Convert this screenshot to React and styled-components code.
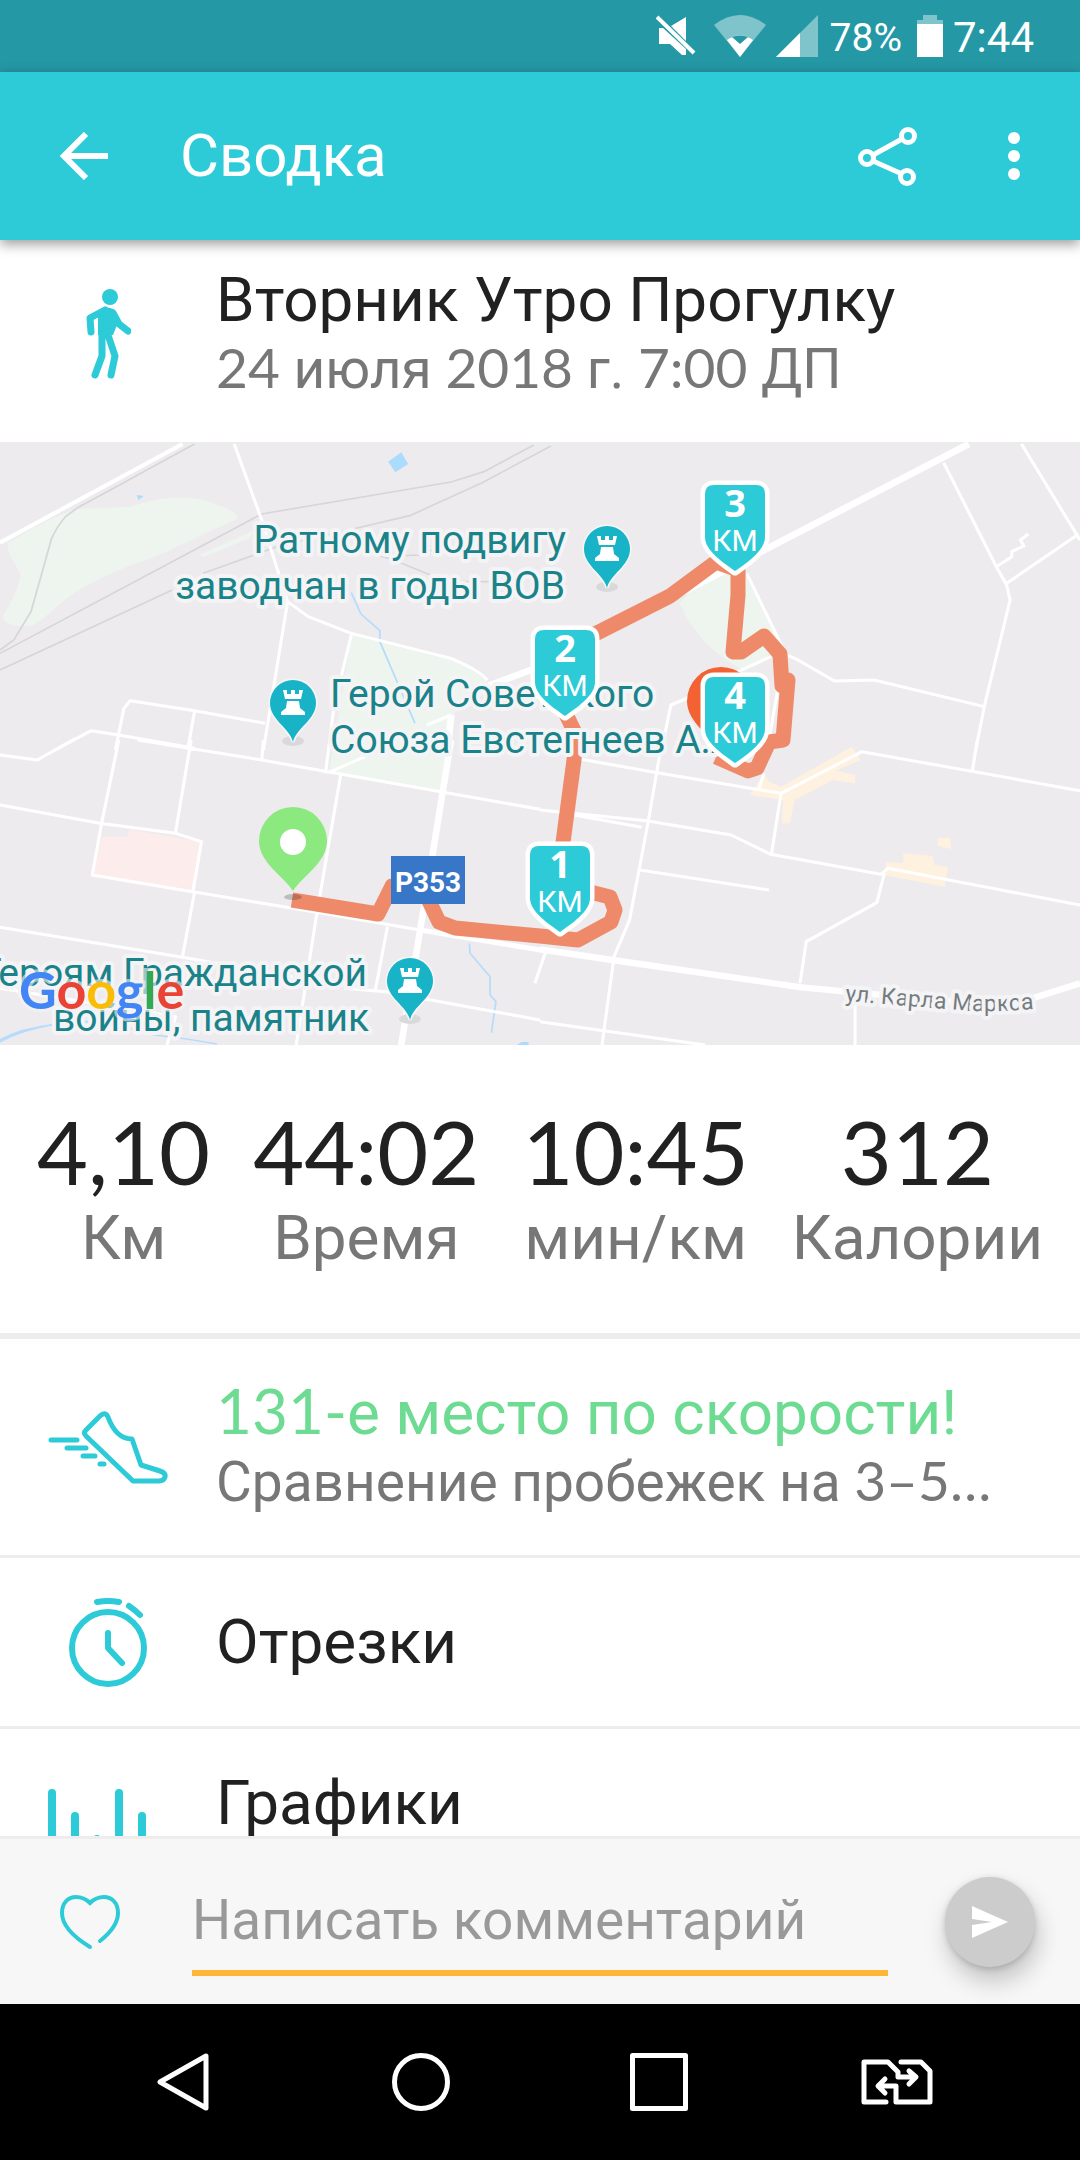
import React from "react";
import styled, { createGlobalStyle } from "styled-components";

const color = {
  accent: "#2dcad7",
  accentDark: "#2498a5",
  text: "#212121",
  muted: "#777777",
  line: "#ededed",
  green: "#6ddb91",
  amber: "#fdb636",
};

const GlobalStyle = createGlobalStyle`
  *, *::before, *::after { box-sizing: border-box; }
  body { margin: 0; font-family: Roboto, "Liberation Sans", sans-serif; color: ${color.text}; background: #fff; }
  button { font: inherit; }
`;

const Screen = styled.div`
  height: 100vh;
  display: flex;
  flex-direction: column;
`;

const StatusBar = styled.div`
  flex: none;
  display: flex;
  align-items: center;
  justify-content: flex-end;
  height: 72px;
  padding: 0 46px;
  background: ${color.accentDark};
  color: #fff;
`;

const StatusIcon = styled.svg`
  display: block;
  flex: none;
  width: ${(p) => p.$width}px;
  height: 42px;
  margin-right: ${(p) => p.$gap}px;
`;

const StatusText = styled.span`
  padding-top: 4px;
  font-size: ${(p) => p.$size}px;
  line-height: 48px;
  margin-right: ${(p) => p.$gap || 0}px;
`;

const AppBar = styled.header`
  flex: none;
  display: flex;
  align-items: center;
  height: 168px;
  padding: 0 4px 0 36px;
  background: ${color.accent};
  color: #fff;
  box-shadow: 0 4px 12px rgba(0, 0, 0, 0.4);
  z-index: 1;
`;

const IconButton = styled.button`
  flex: none;
  display: flex;
  align-items: center;
  justify-content: center;
  width: ${(p) => p.$width || 96}px;
  height: 96px;
  padding: 0;
  border: 0;
  background: none;
  color: inherit;
  cursor: pointer;
`;

const BarTitle = styled.h1`
  flex: 1;
  margin: 0 0 0 48px;
  font-size: 60px;
  line-height: 72px;
  font-weight: 400;
`;

const Content = styled.main`
  flex: 1;
  min-height: 0;
  overflow-y: auto;
  scrollbar-width: none;
`;

const Summary = styled.section`
  display: flex;
  align-items: center;
  padding: 25px 0 39px;
`;

const IconCell = styled.span`
  flex: none;
  display: flex;
  justify-content: center;
  width: 216px;
  color: ${color.accent};
`;

const TextCell = styled.div`
  flex: 1;
  min-width: 0;
`;

const Title = styled.h2`
  margin: 0;
  font-size: 62px;
  line-height: 70px;
  font-weight: 400;
  color: ${(p) => (p.$highlight ? color.green : color.text)};
`;

const Subtitle = styled.div`
  min-height: 68px;
  font-size: 55px;
  line-height: 68px;
  color: ${color.muted};
  white-space: nowrap;
`;

const Digits = styled.span`
  font-family: Lato, "Liberation Sans", sans-serif;
  line-height: 0;
`;

const MapView = styled.svg`
  display: block;
  width: 100%;
  height: auto;
`;

const MapText = styled.text`
  font-family: Roboto, "Liberation Sans", sans-serif;
  font-size: ${(p) => p.$size}px;
  fill: ${(p) => p.$fill};
  stroke: #f4f3f5;
  stroke-width: 8px;
  stroke-linejoin: round;
  paint-order: stroke;
`;

const RoadSign = styled.text`
  font: 700 28px Roboto, "Liberation Sans", sans-serif;
  fill: #fff;
  text-anchor: middle;
`;

const MarkerNumber = styled.text`
  font: 700 38px "Open Sans", "Liberation Sans", sans-serif;
  fill: #fff;
  text-anchor: middle;
`;

const MarkerUnit = styled.text`
  font: 400 30px Roboto, "Liberation Sans", sans-serif;
  fill: #fff;
  text-anchor: middle;
`;

const Brand = styled.text`
  font: 700 52px Lato, "Liberation Sans", sans-serif;
  stroke: #f4f3f5;
  stroke-opacity: 0.6;
  stroke-width: 6px;
  paint-order: stroke;
`;

const Stats = styled.dl`
  display: flex;
  justify-content: space-between;
  margin: 0;
  padding: 54px 37px 60px;
  border-bottom: 6px solid ${color.line};
`;

const Stat = styled.div`
  display: flex;
  flex-direction: column-reverse;
  align-items: center;
`;

const StatValue = styled.dd`
  margin: 0;
  font: 400 88px/104px Lato, "Liberation Sans", sans-serif;
`;

const StatLabel = styled.dt`
  font-size: 62px;
  line-height: 70px;
  color: ${color.muted};
`;

const List = styled.ul`
  margin: 0;
  padding: 0;
  list-style: none;
`;

const Row = styled.a`
  display: flex;
  align-items: center;
  padding: ${(p) => (p.$single ? 49 : 39)}px 0;
  border-bottom: 3px solid ${color.line};
  color: inherit;
  text-decoration: none;
`;

const RowIcon = styled.svg`
  display: block;
  width: 120px;
  height: 120px;
  margin: -25px 0;
  fill: none;
  stroke: ${color.accent};
  stroke-linecap: round;
  stroke-linejoin: round;
`;

const CommentBar = styled.form`
  flex: none;
  display: flex;
  align-items: center;
  height: 168px;
  padding: 0 45px 0 42px;
  border-top: 3px solid ${color.line};
  background: #f7f7f7;
  color: ${color.accent};
`;

const CommentInput = styled.input`
  flex: 1;
  min-width: 0;
  align-self: flex-end;
  height: 112px;
  margin: 0 57px 28px 54px;
  padding: 6px 0 0;
  border: 0;
  border-bottom: 6px solid ${color.amber};
  border-radius: 0;
  outline: 0;
  background: none;
  color: ${color.text};
  font: 400 55px Roboto, "Liberation Sans", sans-serif;
  &::placeholder { color: #999; opacity: 1; }
`;

const SendButton = styled.button`
  flex: none;
  display: flex;
  align-items: center;
  justify-content: center;
  width: 90px;
  height: 90px;
  padding: 0;
  border: 0;
  border-radius: 50%;
  background: #cccccc;
  box-shadow: 3px 14px 24px rgba(0, 0, 0, 0.22), 0 2px 6px rgba(0, 0, 0, 0.16);
`;

const NavBar = styled.nav`
  flex: none;
  display: flex;
  align-items: center;
  height: 156px;
  padding: 0 64px;
  background: #000;
`;

const NavButton = styled.button`
  flex: 1;
  display: flex;
  justify-content: center;
  padding: 0;
  border: 0;
  background: none;
`;

const NavIcon = styled.svg`
  display: block;
  fill: none;
  stroke: #fff;
  stroke-width: 5;
  stroke-linecap: round;
  stroke-linejoin: round;
`;

/* Each tile is drawn on its own 1568 x 930 grid and covers 540 x 310 of the map. */
const Tile = ({ x, y, children }) => (
  <g transform={`translate(${x} ${y}) scale(0.34439 0.33333)`}>{children}</g>
);

const Roads = ({ d, width = 9, stroke = "#fff" }) => (
  <path d={d} fill="none" stroke={stroke} strokeWidth={width} strokeLinejoin="round" />
);

const Castle = ({ x, y }) => (
  <g transform={`translate(${x} ${y})`}>
    <ellipse cx="0" cy="38" rx="11" ry="5" fill="#d9d9dc" />
    <path
      d="M0 39C-3 25-23 17-23 0A23 23 0 0 1 23 0C23 17 3 25 0 39Z"
      fill="#18b3c7"
      stroke="#f7f7f8"
      strokeWidth="3"
      paintOrder="stroke"
    />
    <path
      d="M-10-13H-6V-9H-2V-13H2V-9H6V-13H10L8-4H-8ZM-6-2H6L7 5L12 9V12H-12V9L-7 5Z"
      fill="#fff"
    />
  </g>
);

const KmMarker = ({ x, y, km }) => (
  <g transform={`translate(${x} ${y})`}>
    <path
      d="M-21 0H21Q30 0 30 9V52C30 66 11 78 0 86C-11 78-30 66-30 52V9Q-30 0-21 0Z"
      fill={color.accent}
      stroke="#fff"
      strokeWidth="9"
      strokeLinejoin="round"
      paintOrder="stroke"
    />
    <MarkerNumber x="0" y="32">{km}</MarkerNumber>
    <MarkerUnit x="0" y="66">КМ</MarkerUnit>
  </g>
);

const RouteMap = () => (
  <MapView viewBox="0 442 1080 603" role="img" aria-label="Карта маршрута">
    <rect y="442" width="1080" height="603" fill="#edebee" />

    <path d="M352 635L454 658L487 681V692L455 712L441 792L329 772Z" fill="#eef5ee" />
    <Tile x={0} y={440}>
      <path d="M22 310Q130 240 220 208L380 200Q520 150 620 190Q690 215 690 235Q600 280 450 350Q300 400 200 470Q110 550 90 558Q10 560 8 530Q60 440 60 400Q20 340 22 310Z" fill="#eef5ee" />
      <path d="M580 345L740 270L720 296L590 352Z" fill="#eef5ee" />
      <path d="M1127 65L1165 37L1185 72L1148 97ZM397 165L417 168L402 180Z" fill="#acdcfd" />
      <Roads width={5} stroke="#b5dcfb" d="M1020 458L1048 522L1103 572V605L1205 850" />
      <Roads width={5} stroke="#d6d6d9" d="M0 630L40 600L90 515L150 295Q165 260 190 230L230 200L330 145L470 65L565 12M0 640L500 365L760 222L1310 126L1405 95L1550 15M0 690L500 450M590 400L810 318L950 285L1190 227L1400 128L1600 18M1000 320L1130 355L1250 405L1320 425L1450 425M1110 350L1220 345L1300 310" />
      <Roads width={12} d="M0 308L530 12" />
      <Roads d="M680 12L760 240L835 485L765 930M835 485L895 530L1020 580L1310 655Q1390 690 1415 720M1020 585L970 800L945 1000M160 930L265 872L345 885L565 925M335 930L360 805L378 782L565 812L770 850M565 812L545 930M1310 825L1240 855" />
      <Roads width={20} d="M1310 825L1300 930" />
    </Tile>
    <Tile x={540} y={440}>
      <path d="M530 400L590 395L690 600L660 650L590 690Q460 620 405 490L450 440Z" fill="#eef5ee" />
      <Roads width={20} d="M-170 745L0 680L380 475L530 395L1245 12" />
      <Roads d="M1172 68L1325 380L1355 435L1365 480L1290 800L1265 930M1398 12L1568 300M1560 285L1355 430M1325 380L1370 350V335L1405 318L1395 300L1418 282M600 400L715 645L740 655L855 723L970 720L1290 800M575 695L670 650M450 765L380 795L365 870L350 940M690 750L665 900" />
    </Tile>
    <Tile x={0} y={740}>
      <path d="M295 290H370L375 268L580 305L560 450L270 405Z" fill="#fdecec" />
      <Roads width={5} stroke="#b5dcfb" d="M0 900Q60 865 150 855M0 905Q100 850 250 845Q330 850 450 885Q540 895 630 912M1363 610L1365 640L1423 710V765L1440 785L1427 878" />
      <path d="M1500 915L1515 906H1535V915Z" fill="#acdcfd" />
      <Roads d="M0 45L108 60L220 -5M345 0L295 250L268 405L560 455L585 305L510 280L290 250L0 195M555 0L510 275M400 0L760 60L960 97L1280 155L1568 208M765 0L760 60M560 455L850 505L1220 570M0 562L530 652L850 710M565 455L530 650M0 745L510 830L485 915M990 100L920 520L860 915M1125 560L1090 750M1000 745L1120 755L1568 840M955 97L1060 50M1583 640L1553 730" />
      <Roads width={19} d="M1310 0L1255 350L1220 570L1165 915" />
      <Roads width={15} d="M1220 570L1568 630" />
    </Tile>
    <Tile x={540} y={740}>
      <path d="M610 165L650 100L665 125L700 140L905 20L930 60L860 92L915 105V130L850 120L740 180L725 250H703L705 180ZM1005 365L1055 370V340L1140 348L1145 375L1185 380L1175 440L1000 405ZM1155 293H1190L1195 327L1155 318Z" fill="#fff1e0" />
      <Roads d="M120 58L340 98L700 160L935 35L1568 152M0 210L310 242L555 285L670 343L990 403L1010 385L1568 495M100 225L295 262M350 30L315 240L260 540L215 650L180 915M290 390L665 450M700 160L672 343M1000 400L978 488L773 605L755 730M915 770V915M0 845L185 872L480 915M1270 0L1255 95M635 150L650 100" />
      <Roads width={19} d="M0 628L210 660L760 742L1250 790L1430 775L1568 730" />
    </Tile>

    <path
      d="M292 900L378 914L392 886H420L430 903L439 922L455 928L540 936L578 940L611 922L615 910L610 897L590 892L562 850L574 760L576 735L564 710L580 640L597 633L670 596L716 562L738 570V595L733 652H741L764 636L780 654L782 686L788 680L783 740L769 742L757 768L748 771L716 757"
      fill="none"
      stroke="#ee8a69"
      strokeWidth="15"
      strokeLinejoin="round"
    />

    <g textAnchor="end">
      <MapText $size={39} $fill="#1a838a" x="566" y="553">Ратному подвигу</MapText>
      <MapText $size={39} $fill="#1a838a" x="565" y="599">заводчан в годы ВОВ</MapText>
      <MapText $size={39} $fill="#1a838a" x="367" y="986">Героям Гражданской</MapText>
      <MapText $size={39} $fill="#1a838a" x="369" y="1031">войны, памятник</MapText>
    </g>
    <MapText $size={39} $fill="#1a838a" x="330" y="707">Герой Советского</MapText>
    <MapText $size={39} $fill="#1a838a" x="330" y="753">Союза Евстегнеев А.А.</MapText>
    <path id="marx-street" d="M845 1001L960 1010Q1000 1014 1060 1006" fill="none" />
    <MapText $size={23} $fill="#757c7f">
      <textPath href="#marx-street">ул. Карла Маркса</textPath>
    </MapText>

    <Castle x={607} y={549} />
    <Castle x={293} y={703} />
    <Castle x={410} y={981} />

    <rect x="391" y="856" width="74" height="48" fill="#3877c8" />
    <RoadSign x="428" y="892">Р353</RoadSign>

    <ellipse cx="293" cy="897" rx="9" ry="3" fill="#000" opacity="0.2" />
    <path d="M293 891C284 876 259 863 259 841A34 34 0 0 1 327 841C327 863 302 876 293 891Z" fill="#8ce97f" />
    <circle cx="293" cy="842" r="13" fill="#fff" />
    <path d="M721 751C712 736 687 723 687 701A34 34 0 0 1 755 701C755 723 730 736 721 751Z" fill="#f26233" />

    <KmMarker x={560} y={846} km="1" />
    <KmMarker x={565} y={630} km="2" />
    <KmMarker x={735} y={485} km="3" />
    <KmMarker x={735} y={677} km="4" />

    <Brand x="19" y="1009">
      <tspan fill="#4285f4">G</tspan>
      <tspan fill="#ea4335">o</tspan>
      <tspan fill="#fbbc05">o</tspan>
      <tspan fill="#4285f4">g</tspan>
      <tspan fill="#34a853">l</tspan>
      <tspan fill="#ea4335">e</tspan>
    </Brand>
  </MapView>
);

const stats = [
  { value: "4,10", label: "Км" },
  { value: "44:02", label: "Время" },
  { value: "10:45", label: "мин/км" },
  { value: "312", label: "Калории" },
];

export default function App() {
  return (
    <Screen>
      <GlobalStyle />

      <StatusBar>
        <StatusIcon $width={40} $gap={18} viewBox="0 0 40 42" fill="#fff">
          <path d="M3 13V29H14L26 40H30V34L7 13ZM15 11L30 2V26Z" />
          <path d="M1 2L38 38" stroke="#fff" strokeWidth="4" />
        </StatusIcon>
        <StatusIcon $width={52} $gap={10} viewBox="0 0 52 42" fill="#fff">
          <path d="M0 10Q26-10 52 10L26 42Z" opacity="0.42" />
          <path d="M13 25Q26 16 39 25L26 42Z" />
          <path d="M18 22Q26 19 34 22L26 29Z" fill={color.accentDark} />
        </StatusIcon>
        <StatusIcon $width={42} $gap={12} viewBox="0 0 42 42" fill="#fff">
          <path d="M42 0V42H0Z" opacity="0.42" />
          <path d="M24 18V42H0Z" />
        </StatusIcon>
        <StatusText $size={39} $gap={15}>78%</StatusText>
        <StatusIcon $width={26} $gap={10} viewBox="0 0 26 42" fill="#fff">
          <path d="M6 0H20V5H26V9H0V5H6Z" opacity="0.42" />
          <path d="M0 9H26V42H0Z" />
        </StatusIcon>
        <StatusText $size={42}>7:44</StatusText>
      </StatusBar>

      <AppBar>
        <IconButton type="button" aria-label="Назад">
          <svg width="48" height="48" viewBox="0 0 48 48" fill="none" stroke="#fff" strokeWidth="6">
            <path d="M48 24H5M26 2L4 24L26 46" />
          </svg>
        </IconButton>
        <BarTitle>Сводка</BarTitle>
        <IconButton type="button" $width={128} aria-label="Поделиться">
          <svg width="60" height="60" viewBox="0 0 60 60" fill="none" stroke="#fff" strokeWidth="5">
            <path d="M15 29L44 13M15 35L44 48" />
            <circle cx="9" cy="32" r="6.5" />
            <circle cx="50" cy="10" r="6.5" />
            <circle cx="49" cy="51" r="6.5" />
          </svg>
        </IconButton>
        <IconButton type="button" $width={124} aria-label="Ещё">
          <svg width="12" height="48" viewBox="0 0 12 48" fill="#fff">
            <circle cx="6" cy="6" r="6" />
            <circle cx="6" cy="24" r="6" />
            <circle cx="6" cy="42" r="6" />
          </svg>
        </IconButton>
      </AppBar>

      <Content>
        <Summary>
          <IconCell>
            <svg width="45" height="90" viewBox="0 0 45 90" fill="currentColor">
              <circle cx="24" cy="8" r="8" />
              <path d="M12 22Q20 16 27 20Q30 22 33 31L27 46H12Z" />
              <path
                d="M5 43L4 29L19 21M27 24L33 35L42 42M16 44V67L9 86M21 43L29 67L25 86"
                fill="none"
                stroke="currentColor"
                strokeWidth="7"
                strokeLinecap="round"
                strokeLinejoin="round"
              />
            </svg>
          </IconCell>
          <TextCell>
            <Title>Вторник Утро Прогулку</Title>
            <Subtitle>
              <Digits>24</Digits> июля <Digits>2018</Digits> г. <Digits>7:00</Digits> ДП
            </Subtitle>
          </TextCell>
        </Summary>

        <RouteMap />

        <Stats>
          {stats.map((s) => (
            <Stat key={s.label}>
              <StatLabel>{s.label}</StatLabel>
              <StatValue>{s.value}</StatValue>
            </Stat>
          ))}
        </Stats>

        <List>
          <li>
            <Row href="#pace">
              <IconCell>
                <RowIcon viewBox="0 0 120 120" strokeWidth="5">
                  <path d="M52 29Q57 24 60 30Q68 52 84 52L93 78L112 84Q118 86 117 90Q116 94 111 94H85L38 49Q35 46 38 43Z" />
                  <path d="M3 53H29M19 61H38M35 69H47M52 77H56" />
                </RowIcon>
              </IconCell>
              <TextCell>
                <Title $highlight><Digits>131-</Digits>е место по скорости!</Title>
                <Subtitle>Сравнение пробежек на <Digits>3–5…</Digits></Subtitle>
              </TextCell>
            </Row>
          </li>
          <li>
            <Row href="#splits" $single>
              <IconCell>
                <RowIcon viewBox="0 0 120 120" strokeWidth="6">
                  <circle cx="60" cy="66" r="36" />
                  <path d="M60 51V66L74 81M49 20Q60 18 71 20M81 24Q87 28 92 33" />
                </RowIcon>
              </IconCell>
              <TextCell><Title>Отрезки</Title></TextCell>
            </Row>
          </li>
          <li>
            <Row href="#charts">
              <IconCell>
                <RowIcon viewBox="0 0 120 120" strokeWidth="8">
                  <path d="M4 16V104M27 39V104M49 62V104M71 16V104M94 39V104M116 72V104" />
                </RowIcon>
              </IconCell>
              <TextCell>
                <Title>Графики</Title>
                <Subtitle />
              </TextCell>
            </Row>
          </li>
        </List>
      </Content>

      <CommentBar onSubmit={(e) => e.preventDefault()}>
        <IconButton type="button" aria-label="Нравится">
          <svg width="60" height="60" viewBox="0 0 60 60" fill="none" stroke="currentColor" strokeWidth="4" strokeLinecap="round">
            <path d="M30 55C12 44 2 33 2 21C2 11 8 5 16 5C22 5 27 8 30 11C33 8 38 5 44 5C52 5 58 11 58 21C58 31 50 41 40 49" />
          </svg>
        </IconButton>
        <CommentInput type="text" aria-label="Комментарий" placeholder="Написать комментарий" />
        <SendButton type="submit" aria-label="Отправить">
          <svg width="36" height="32" viewBox="0 0 36 32" fill="#fff">
            <path d="M0 0L36 16L0 32V19L20 16L0 13Z" />
          </svg>
        </SendButton>
      </CommentBar>

      <NavBar>
        <NavButton type="button" aria-label="Назад">
          <NavIcon width="52" height="58" viewBox="0 0 52 58"><path d="M49 3V55L3 29Z" /></NavIcon>
        </NavButton>
        <NavButton type="button" aria-label="Домой">
          <NavIcon width="58" height="58" viewBox="0 0 58 58"><circle cx="29" cy="29" r="26.5" /></NavIcon>
        </NavButton>
        <NavButton type="button" aria-label="Недавние">
          <NavIcon width="58" height="58" viewBox="0 0 58 58"><path d="M2.5 2.5H55.5V55.5H2.5Z" /></NavIcon>
        </NavButton>
        <NavButton type="button" aria-label="Сменить SIM-карту">
          <NavIcon width="72" height="46" viewBox="0 0 72 46">
            <path d="M25 43H3V3H27L37 13V18H53M48 12L55 18L48 25M40 3H60L69 12V43H35V27H19M24 20L17 27L24 34" />
          </NavIcon>
        </NavButton>
      </NavBar>
    </Screen>
  );
}
